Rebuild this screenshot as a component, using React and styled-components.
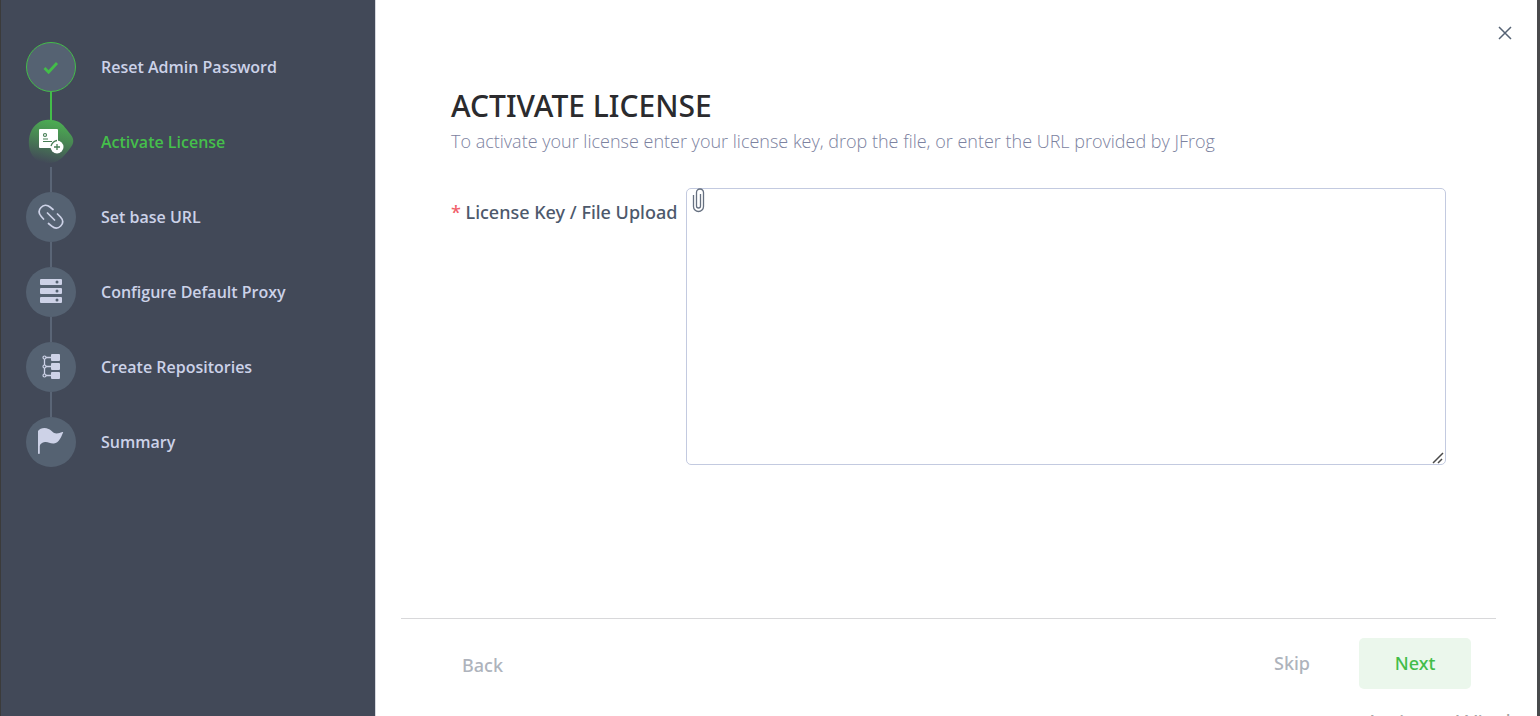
import React from 'react';
import styled, { createGlobalStyle, css } from 'styled-components';

const Global = createGlobalStyle`
  *, *::before, *::after { box-sizing: border-box; }
  body { margin: 0; font-family: "Open Sans", "Noto Sans", sans-serif; background: #494a4c; }
  button, textarea { font-family: inherit; }
`;

const Wizard = styled.div`
  display: flex;
  height: 100vh;
  overflow: hidden;
  border-left: 1px solid #3b3b3b;
  border-right: 3px solid #494a4c;
`;

const Sidebar = styled.nav`
  flex: 0 0 375px;
  padding: 42px 25px;
  background: #424958;
  border-right: 1px solid #d5d7de;
`;

const StepList = styled.ol`
  display: flex;
  flex-direction: column;
  margin: 0;
  padding: 0;
  list-style: none;
`;

const Step = styled.li`
  display: grid;
  grid-template-columns: 50px 1fr;
  column-gap: 25px;
  font-size: 16px;
  font-weight: 600;
  line-height: 50px;
  color: ${({ $active }) => ($active ? '#45bf4b' : '#ccd2e8')};
`;

const StepIcon = styled.span`
  display: flex;
  align-items: center;
  justify-content: center;
  width: 50px;
  height: 50px;
  border-radius: 50%;
  color: #cdd2e7;
  background: #556272;
  ${({ $state }) => $state === 'done' && css`
    border: 1px solid #43bd49;
    color: #43bd49;
  `}
  ${({ $state }) => $state === 'active' && css`
    background: none;
  `}
`;

const Connector = styled.span`
  justify-self: center;
  width: 2px;
  height: 25px;
  background: ${({ $done }) => ($done ? '#43bd49' : '#5a6576')};
`;

const Main = styled.main`
  flex: 1;
  min-width: 0;
  display: flex;
  flex-direction: column;
  background: #fff;
`;

const TopBar = styled.div`
  display: flex;
  justify-content: flex-end;
  padding: 24px 23px 0;
`;

const CloseButton = styled.button`
  display: flex;
  padding: 0;
  border: 0;
  background: none;
  color: #556274;
  cursor: pointer;
`;

const Content = styled.section`
  flex: 1;
  padding: 42px 91px 0 75px;
`;

const Title = styled.h1`
  margin: 0;
  font-family: "Noto Sans", sans-serif;
  font-size: 30px;
  font-weight: 500;
  line-height: 44px;
  color: #2b2b2e;
`;

const Subtitle = styled.p`
  margin: 0;
  font-size: 18px;
  font-weight: 300;
  line-height: 26px;
  color: #7c82a0;
`;

const Field = styled.div`
  display: grid;
  grid-template-columns: 225px 1fr;
  column-gap: 10px;
  margin-top: 34px;
`;

const FieldLabel = styled.label`
  padding-top: 12px;
  font-family: "Noto Sans", sans-serif;
  font-size: 18px;
  font-weight: 500;
  line-height: 24px;
  color: #4d596c;
  white-space: nowrap;
`;

const Required = styled.span`
  color: #f1606a;
`;

const Upload = styled.div`
  position: relative;
  display: flex;
`;

const KeyInput = styled.textarea`
  width: 100%;
  height: 277px;
  padding: 10px 28px;
  border: 1px solid #c3cae0;
  border-radius: 5px;
  background: #fff;
  font-size: 16px;
  resize: none;
`;

const AttachButton = styled.button`
  position: absolute;
  top: 0;
  left: 6px;
  display: flex;
  padding: 0;
  border: 0;
  background: none;
  color: #667080;
`;

const Grip = styled.svg`
  position: absolute;
  right: 2px;
  bottom: 1px;
  pointer-events: none;
`;

const Footer = styled.footer`
  display: flex;
  align-items: center;
  margin: 0 41px 0 25px;
  padding: 19px 25px 0 46px;
  border-top: 1px solid #d8d8da;
`;

const Action = styled.button`
  height: 51px;
  padding: 0 15px 2px;
  border: 0;
  border-radius: 5px;
  background: none;
  font-family: "Noto Sans", sans-serif;
  font-size: 18px;
  font-weight: 500;
  color: #aeb3bc;
  ${({ $primary }) => $primary && css`
    min-width: 112px;
    margin-left: 34px;
    background: #ebf7ec;
    color: #43bd49;
  `}
`;

const BackAction = styled(Action)`
  margin-right: auto;
  padding: 2px 15px 0;
`;

const Watermark = styled.p`
  align-self: flex-end;
  width: 172px;
  height: 27px;
  margin: 0;
  padding-top: 19px;
  overflow: hidden;
  font-size: 23px;
  line-height: 30px;
  white-space: nowrap;
  color: #a5a5a5;
`;

const CheckIcon = () => (
  <svg width="16" height="14" viewBox="0 0 16 14" fill="none" stroke="currentColor" strokeWidth="2.8" aria-hidden="true">
    <path d="M1.5 8 5.6 12.200 14 3" />
  </svg>
);

const LicenseIcon = () => (
  <svg width="50" height="50" viewBox="0 0 50 50" aria-hidden="true">
    <defs>
      <linearGradient id="blob" x1=".65" y1="0" x2=".4" y2="1">
        <stop offset="0" stopColor="#4cb052" />
        <stop offset=".45" stopColor="#488653" />
        <stop offset="1" stopColor="#424958" />
      </linearGradient>
    </defs>
    <path fill="#43bd49" d="M24 0h2v6h-2z" />
    <path fill="url(#blob)" d="M12 6C17 2 26 2 33 5c5 3 7 7 12 13 3 4 3 8 0 12-6 8-11 15-20 16C13 48 4 40 3 29 2 19 5 11 12 6Z" />
    <path fill="#fff" d="M14 12h17a1 1 0 0 1 1 1v17a1 1 0 0 1-1 1H14a1 1 0 0 1-1-1V13a1 1 0 0 1 1-1Z" />
    <circle cx="19" cy="18" r="1.500" fill="none" stroke="#477e55" strokeWidth="1.200" />
    <path stroke="#477e55" strokeWidth="1.200" d="M17 22h5M17 24.500h9" />
    <circle cx="31" cy="30" r="6.500" fill="#fff" />
    <path stroke="#477e55" strokeWidth="1.300" d="M25 29c1-3 3-5 6-5.500M31 27v6M28 30h6" fill="none" />
  </svg>
);

const LinkIcon = () => (
  <svg width="26" height="26" viewBox="0 0 26 26" fill="none" stroke="currentColor" strokeWidth="1.700" strokeLinecap="round" aria-hidden="true">
    <path d="M5.500 15 3.300 12.500C.6 9.500.6 6 3 3.500S9 .6 12 3L15 5.500M19.500 10l3 3c2.800 3 2.800 6.300.2 9s-6 2.700-9 .2L10.500 19.500M9.500 9l7 7" />
  </svg>
);

const ServerIcon = () => (
  <svg width="22" height="26" viewBox="0 0 22 26" fill="currentColor" aria-hidden="true">
    <rect y="0" width="22" height="6" rx="1" />
    <rect y="9" width="22" height="6" rx="1" />
    <rect y="18" width="22" height="6" rx="1" />
    <g fill="#556272">
      <circle cx="17" cy="3" r="1.500" /><circle cx="17" cy="12" r="1.500" /><circle cx="17" cy="21" r="1.500" />
    </g>
  </svg>
);

const RepoIcon = () => (
  <svg width="18" height="26" viewBox="0 0 18 26" fill="currentColor" stroke="currentColor" aria-hidden="true">
    <path fill="none" strokeWidth="1.300" d="M2.500 3v18.500M2.500 3.500H10M2.500 12.500H10M2.500 21.500H10" />
    <g stroke="none">
      <rect x="9" y="0" width="9" height="7" rx="1" />
      <rect x="9" y="9" width="9" height="7" rx="1" />
      <rect x="9" y="18" width="9" height="7" rx="1" />
    </g>
    <g fill="#556272" strokeWidth="1.200">
      <circle cx="2.500" cy="3.500" r="1.500" /><circle cx="2.500" cy="12.500" r="1.500" /><circle cx="2.500" cy="21.500" r="1.500" />
    </g>
  </svg>
);

const FlagIcon = () => (
  <svg width="26" height="28" viewBox="0 0 26 28" fill="currentColor" aria-hidden="true">
    <path d="M0 3C2 0 7-.8 10.500 1c3.500 1.500 4.500 4.500 8 4.500 2.500 0 3.500-.8 6-1.500.5-.2.800.2.600.6C23 9.500 21 15 16 15.500c-4 .4-6-2-9-1.500-3 .4-5 2-5.200 4V25.500c0 .6-1.800.6-1.800 0Z" />
  </svg>
);

const CloseIcon = () => (
  <svg width="18" height="18" viewBox="0 0 18 18" stroke="currentColor" strokeWidth="1.500" aria-hidden="true">
    <path d="m3 3 12 12M15 3 3 15" />
  </svg>
);

const ClipIcon = () => (
  <svg width="14" height="26" viewBox="0 0 14 26" fill="none" stroke="currentColor" strokeWidth="1.300" aria-hidden="true">
    <path d="M1.500 7v11.500a5 5 0 0 0 10 0V4.500a3.500 3.500 0 0 0-7 0v13.500a2 2 0 0 0 4 0V6" />
  </svg>
);

const steps = [
  { label: 'Reset Admin Password', icon: CheckIcon, state: 'done' },
  { label: 'Activate License', icon: LicenseIcon, state: 'active' },
  { label: 'Set base URL', icon: LinkIcon },
  { label: 'Configure Default Proxy', icon: ServerIcon },
  { label: 'Create Repositories', icon: RepoIcon },
  { label: 'Summary', icon: FlagIcon },
];

export default function App() {
  return (
    <>
      <Global />
      <Wizard>
        <Sidebar aria-label="Setup steps">
          <StepList>
            {steps.map(({ label, icon: Icon, state }, i) => (
              <Step key={label} $active={state === 'active'} aria-current={state === 'active' ? 'step' : undefined}>
                <StepIcon $state={state}><Icon /></StepIcon>
                <span>{label}</span>
                {i < steps.length - 1 && <Connector $done={state === 'done'} />}
              </Step>
            ))}
          </StepList>
        </Sidebar>
        <Main>
          <TopBar>
            <CloseButton type="button" aria-label="Close"><CloseIcon /></CloseButton>
          </TopBar>
          <Content>
            <Title>ACTIVATE LICENSE</Title>
            <Subtitle>To activate your license enter your license key, drop the file, or enter the URL provided by JFrog</Subtitle>
            <Field>
              <FieldLabel htmlFor="license"><Required>*</Required> License Key / File Upload</FieldLabel>
              <Upload>
                <KeyInput id="license" required />
                <AttachButton type="button" aria-label="Attach file"><ClipIcon /></AttachButton>
                <Grip width="12" height="12" viewBox="0 0 12 12" stroke="#4a4a4a" strokeWidth="1.500" aria-hidden="true">
                  <path d="M1 11 11 1M6 11l4-4" />
                </Grip>
              </Upload>
            </Field>
          </Content>
          <Footer>
            <BackAction type="button">Back</BackAction>
            <Action type="button">Skip</Action>
            <Action type="button" $primary>Next</Action>
          </Footer>
          <Watermark>Activate Windows</Watermark>
        </Main>
      </Wizard>
    </>
  );
}
